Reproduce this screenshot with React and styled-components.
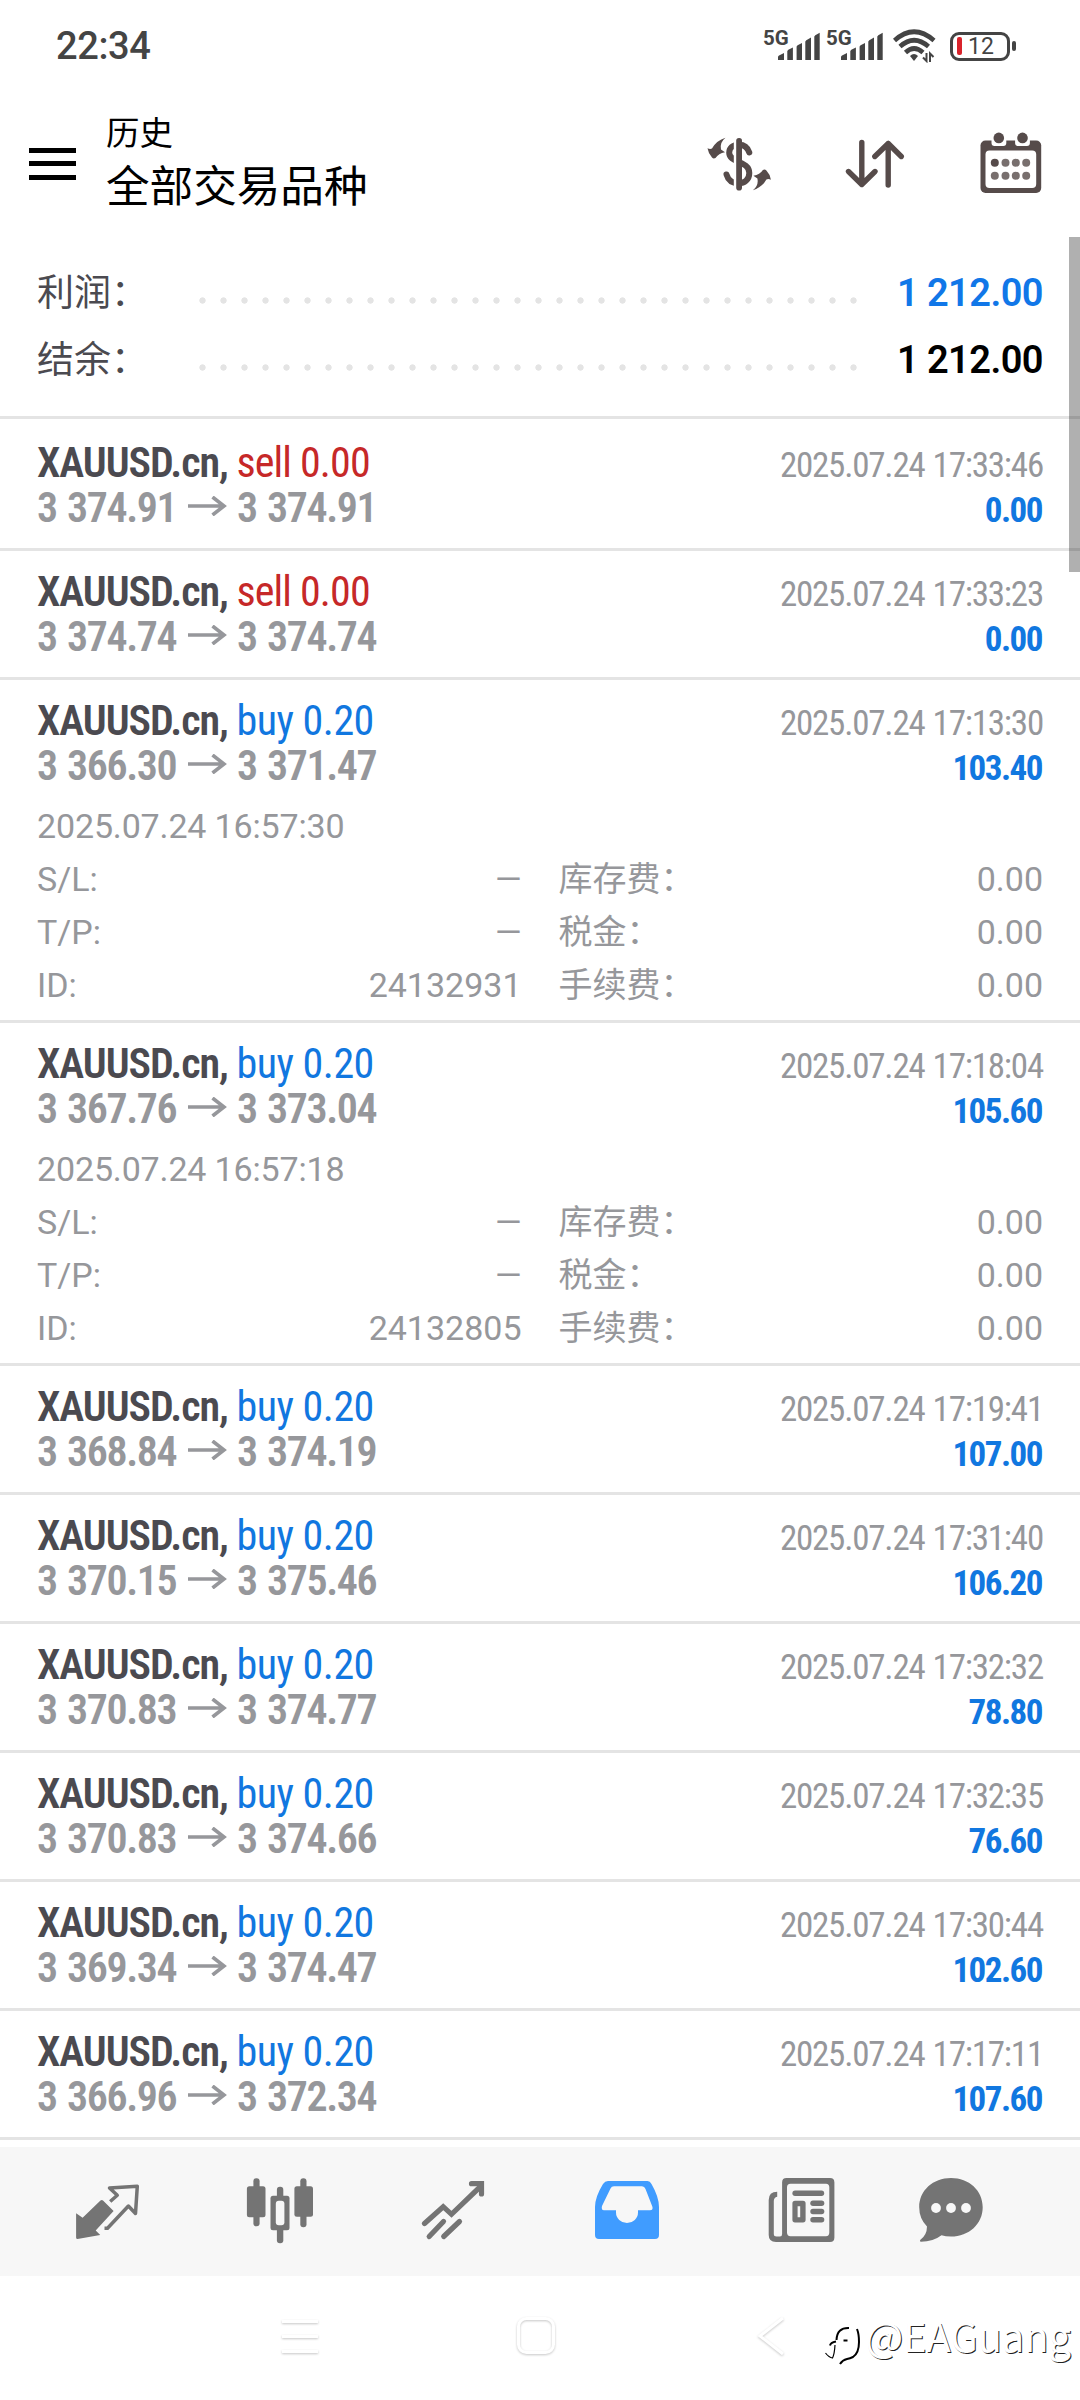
import React from 'react';
import styled, { createGlobalStyle } from 'styled-components';

const GlobalStyle = createGlobalStyle`
  * {
    box-sizing: border-box;
  }

  body {
    margin: 0;
    background: #fff;
    font-family: Roboto, 'Noto Sans CJK SC', sans-serif;
  }

  svg {
    display: block;
    flex-shrink: 0;
  }
`;

const Screen = styled.div`
  position: relative;
  display: flex;
  flex-direction: column;
  width: 1080px;
  height: 2400px;
  overflow: hidden;
  background: #fff;
`;

const StatusBar = styled.div`
  display: flex;
  justify-content: space-between;
  height: 90px;
  padding: 16px 64px 0 56px;
  color: #444;
`;

const Clock = styled.div`
  font-size: 38px;
  font-weight: 500;
  letter-spacing: -0.4px;
  line-height: 60px;
`;

const StatusIcons = styled.div`
  display: flex;
  align-items: center;
  height: 60px;
`;

const Signals = styled.div`
  display: flex;
  margin-right: 4px;
`;

const Signal = styled.div`
  display: flex;
  width: 63px;
  height: 32px;
`;

const Network = styled.span`
  width: 15px;
  font-size: 20.5px;
  font-weight: 700;
  line-height: 16px;
  white-space: nowrap;
`;

const Battery = styled.div`
  display: flex;
  align-items: center;
  width: 60px;
  height: 29px;
  margin-left: 14px;
  padding-left: 4px;
  border: 3px solid #444;
  border-radius: 9px;
  font-size: 23px;
  line-height: 23px;

  &::before {
    content: '';
    width: 5px;
    height: 18px;
    margin-right: 6px;
    border-radius: 2px;
    background: #d9232b;
  }
`;

const BatteryTip = styled.div`
  width: 4px;
  height: 10px;
  margin-left: 2px;
  border-radius: 2px;
  background: #444;
`;

const Header = styled.header`
  display: flex;
  align-items: center;
  height: 147px;
  padding: 0 37px 0 29px;
  color: #000;
`;

const MenuButton = styled.div`
  display: flex;
  flex-direction: column;
  justify-content: space-between;
  width: 47px;
  height: 32px;

  span {
    height: 5px;
    background: #000;
  }
`;

const Titles = styled.div`
  flex: 1;
  margin-left: 30px;
`;

const Title = styled.div`
  font-size: 33.5px;
  line-height: 48px;
`;

const Subtitle = styled.div`
  font-size: 43.6px;
  line-height: 60px;
`;

const Actions = styled.div`
  display: flex;
  gap: 72px;
  color: #564b4a;
`;

const History = styled.main`
  position: relative;
  height: 1910px;
`;

const ScrollThumb = styled.div`
  position: absolute;
  top: 0;
  right: 0;
  width: 11px;
  height: 335px;
  background: rgba(0, 0, 0, 0.31);
`;

const Summary = styled.section`
  height: 182px;
  padding: 23px 37px 0;
  border-bottom: 3px solid #e4e4e4;
`;

const SummaryRow = styled.div`
  display: flex;
  height: 67px;
  line-height: 67px;
`;

const SummaryLabel = styled.div`
  width: 155px;
  color: #4b4a50;
  font-size: 37px;
`;

const Dots = styled.div`
  width: 672px;
  height: 7px;
  margin-top: 37px;
  background: radial-gradient(circle, #e4e4e4 2.8px, transparent 3.5px) 0 0 / 21px 7px repeat-x;
`;

const SummaryValue = styled.div`
  flex: 1;
  color: ${(props) => props.$color};
  font-size: 38px;
  font-weight: 600;
  letter-spacing: -0.55px;
  text-align: right;
`;

const Deal = styled.article`
  padding: 18px 37px ${(props) => (props.$open ? 8 : 18)}px;
  border-top: 3px solid ${(props) => (props.$first ? 'transparent' : '#e4e4e4')};
  font-stretch: 75%;
`;

const DealLine = styled.div`
  display: flex;
  align-items: baseline;
  height: 45px;
  line-height: 45px;
  white-space: pre;
`;

const Symbol = styled.span`
  color: #4b4a50;
  font-size: 42px;
  font-weight: 600;
  letter-spacing: -1.05px;
`;

const Side = styled.span`
  color: ${(props) => (props.$side === 'sell' ? '#c62828' : '#1177e0')};
  font-size: 42px;
  letter-spacing: ${(props) => (props.$side === 'sell' ? -0.85 : -0.5)}px;
`;

const Prices = styled.span`
  display: flex;
  align-items: baseline;
  color: #96979b;
  font-size: 42px;
  font-weight: 600;
  letter-spacing: -1.35px;
  word-spacing: 1.8px;

  svg {
    align-self: center;
    margin-bottom: 3px;
  }
`;

const Price = styled.span`
  width: ${(props) => (props.$open ? '151px' : 'auto')};
`;

const CloseTime = styled.span`
  margin-left: auto;
  color: #96979b;
  font-size: 35px;
  letter-spacing: -1.2px;
  word-spacing: 1.2px;
`;

const Profit = styled.span`
  margin-left: auto;
  padding-right: 1px;
  color: #1177e0;
  font-size: 35px;
  font-weight: 700;
  letter-spacing: -1.5px;
`;

const Details = styled.div`
  display: grid;
  grid-template-columns: 1fr 1fr;
  column-gap: 37px;
  margin-top: 12px;
  color: #96979b;
  font-size: 34px;
  font-stretch: 100%;
  line-height: 53px;
`;

const OpenTime = styled.div`
  grid-column: 1 / -1;
  height: 53px;
  letter-spacing: -0.15px;
`;

const Detail = styled.div`
  display: flex;
  justify-content: space-between;
  height: 53px;
`;

const EndLine = styled.div`
  height: 3px;
  background: #e4e4e4;
`;

const TabBar = styled.nav`
  display: grid;
  grid-template-columns: repeat(4, 174px) 151px 72px;
  height: 129px;
  padding: 28px 0 0 72px;
  background: #f7f7f7;
`;

const Tab = styled.div`
  color: ${(props) => (props.$active ? '#409cff' : '#747474')};
`;

const SystemNav = styled.div`
  display: flex;
  align-items: center;
  height: 124px;
  padding: 0 0 2px 278px;

  svg {
    filter: drop-shadow(0 1px 1px rgba(0, 0, 0, 0.22));
  }
`;

const NavIcon = styled.svg`
  margin-right: ${(props) => props.$gap || 0}px;
`;

const Watermark = styled.div`
  position: absolute;
  right: 9px;
  bottom: 35px;
  display: flex;
  align-items: center;
  height: 60px;
  color: #fff;
  font-family: 'Noto Sans CJK SC', sans-serif;
  font-size: 39.8px;
  line-height: 60px;
  text-shadow: 1px 1px 0 #222;

  svg {
    margin: 20px -2px 0 2px;
  }
`;

const deals = [
  { side: 'sell', volume: '0.00', open: '3 374.91', close: '3 374.91', time: '2025.07.24 17:33:46', profit: '0.00' },
  { side: 'sell', volume: '0.00', open: '3 374.74', close: '3 374.74', time: '2025.07.24 17:33:23', profit: '0.00' },
  { side: 'buy', volume: '0.20', open: '3 366.30', close: '3 371.47', time: '2025.07.24 17:13:30', profit: '103.40', openTime: '2025.07.24 16:57:30', id: '24132931' },
  { side: 'buy', volume: '0.20', open: '3 367.76', close: '3 373.04', time: '2025.07.24 17:18:04', profit: '105.60', openTime: '2025.07.24 16:57:18', id: '24132805' },
  { side: 'buy', volume: '0.20', open: '3 368.84', close: '3 374.19', time: '2025.07.24 17:19:41', profit: '107.00' },
  { side: 'buy', volume: '0.20', open: '3 370.15', close: '3 375.46', time: '2025.07.24 17:31:40', profit: '106.20' },
  { side: 'buy', volume: '0.20', open: '3 370.83', close: '3 374.77', time: '2025.07.24 17:32:32', profit: '78.80' },
  { side: 'buy', volume: '0.20', open: '3 370.83', close: '3 374.66', time: '2025.07.24 17:32:35', profit: '76.60' },
  { side: 'buy', volume: '0.20', open: '3 369.34', close: '3 374.47', time: '2025.07.24 17:30:44', profit: '102.60' },
  { side: 'buy', volume: '0.20', open: '3 366.96', close: '3 372.34', time: '2025.07.24 17:17:11', profit: '107.60' },
];

const SignalBars = () => (
  <svg width="42" height="31" viewBox="0 0 42 31" fill="currentColor">
    <path d="M0 30v-3q0-1 1-1.600l5-2.400v7zM9.300 30v-9l1-1.300 4.600-2.200V30zM18.600 30V16.500l1-1.300 4.400-2.200V30zM27.300 30V11.500l1-1.300 4.700-2.700V30zM36.300 30V6.500l1-1.300 4.400-2.400V30z" />
  </svg>
);

const WifiIcon = () => (
  <svg width="43" height="34" viewBox="0 0 43 34" fill="none" stroke="currentColor">
    <path d="M1.500 11.500Q21 -6 41 11.500" strokeWidth="4.600" />
    <path d="M7 17.500Q21 5 35.500 17.500" strokeWidth="4.600" />
    <path d="M12.500 23.500Q21 15.500 30 23.500" strokeWidth="4.600" />
    <path d="M17 27q4-4 8 0l-4 5z" fill="currentColor" stroke="none" />
    <path d="M30 28.500l3.500 3.500v-8M40.500 28L37 24.500V33" strokeWidth="2" />
  </svg>
);

const CurrencyIcon = () => {
  const arrow = 'M18.500 5.800Q12.500 10.500 14 17.500L18 20.200Q11.500 21.500 8.500 26Q6.500 27 5 25.500Q1.500 22 0.500 16.200Q3 17.500 5 16.500Q9.500 8.500 18.500 5.800Z';
  return (
    <svg width="64" height="64" viewBox="0 0 64 64">
      <path
        d="M42.300 20.500C40.500 15 37 12.800 32 12.800C25.500 12.800 22.200 16.300 22.200 20.800C22.200 31 42.300 28.500 42.300 41C42.300 48 37 51.300 32 51.300C25.500 51.300 21 48 19.500 42.500"
        fill="none"
        stroke="currentColor"
        strokeWidth="6"
        strokeLinecap="round"
      />
      <path d="M26.800 6h4v53h-4z" fill="#fff" />
      <rect x="29.200" y="6" width="5.800" height="52.500" rx="2.800" fill="currentColor" />
      <path d={arrow} fill="currentColor" />
      <path d={arrow} fill="currentColor" transform="rotate(180 32.200 32)" />
    </svg>
  );
};

const SortIcon = () => (
  <svg width="64" height="64" viewBox="0 0 64 64" fill="none" stroke="currentColor" strokeWidth="5.400" strokeLinecap="round" strokeLinejoin="round">
    <path d="M18.800 10.500V52.500M5.500 39.500L18.800 52.500L32 39.500" />
    <path d="M45.200 53V11.500M31.800 24.500L45.200 11.500L58.300 24.500" />
  </svg>
);

const CalendarIcon = () => (
  <svg width="64" height="64" viewBox="0 0 64 64" fill="currentColor">
    <rect x="1.500" y="8.500" width="60.700" height="52.500" rx="5" />
    <rect x="6.500" y="18.500" width="50.700" height="37.500" rx="4" fill="#fff" />
    <path d="M12.500 8h14.800v3q0 3-3 3h-8.800q-3 0-3-3zM36.100 8h14.800v3q0 3-3 3h-8.800q-3 0-3-3z" fill="#fff" />
    <circle cx="19.800" cy="5.900" r="5.300" />
    <circle cx="43.500" cy="5.900" r="5.300" />
    {[30.8, 43.8].map((y) =>
      [15.8, 26.5, 36.8, 47.2].map((x) => (
        <circle key={`${x}-${y}`} cx={x} cy={y} r="4" opacity={x < 20 && y < 40 ? 1 : 0.8} />
      ))
    )}
  </svg>
);

const PriceArrow = () => (
  <svg width="49" height="20" viewBox="0 0 49 20" fill="none" stroke="#96979b" strokeWidth="3.600">
    <path d="M0 10H36M24.500 1L36 10L24.500 19" />
  </svg>
);

const TradeIcon = () => (
  <svg width="72" height="72" viewBox="0 0 72 72">
    <path d="M4.100 38.300L10.600 42.700L28.500 25.500Q29.900 24.500 31 25.500L41.600 36L23.700 55.500L28.200 60L5.500 64Q4.100 64 4.100 62.500Z" fill="currentColor" />
    <path d="M38.200 26.500L45.300 20.300L37.500 13L65.300 11.200L63.500 38.500L56.400 31L35.500 53.200H32.500" fill="none" stroke="currentColor" strokeWidth="3.500" strokeLinejoin="round" />
  </svg>
);

const ChartIcon = () => (
  <svg width="72" height="72" viewBox="0 0 72 72" fill="currentColor">
    <rect x="7.400" y="3.300" width="6.200" height="48" rx="3" />
    <rect x="0.900" y="11.300" width="18.600" height="31" rx="2.500" />
    <rect x="30.900" y="11.700" width="6.400" height="56.600" rx="3" />
    <rect x="24.500" y="20.700" width="19" height="34.500" rx="2.500" />
    <rect x="29.800" y="25.700" width="8.600" height="24.500" rx="3" fill="#f7f7f7" />
    <rect x="54.300" y="3.300" width="6.200" height="49" rx="3" />
    <rect x="48.400" y="11.300" width="18.600" height="30.500" rx="2.500" />
  </svg>
);

const SignalsIcon = () => (
  <svg width="72" height="72" viewBox="0 0 72 72" fill="none" stroke="currentColor" strokeWidth="5.200" strokeLinecap="round">
    <path d="M4.500 48.500L23.200 31.700L31.500 39.300L61 11" />
    <path d="M51.500 8.700H61.500V19" />
    <path d="M9.200 61.500L23.500 46.500M23.700 61.500L39.500 46.500" />
  </svg>
);

const InboxIcon = () => (
  <svg width="72" height="72" viewBox="0 0 72 72" fill="currentColor" fillRule="evenodd">
    <path d="M14 6H53.500Q56 6 57.500 9Q65 22 65 32V60Q65 64 61 64H5Q1 64 1 60V32Q1 22 9 9Q11 6 14 6ZM20 11.300Q17.500 11.300 16.500 13.500L8 31Q7 35.200 10 35.200H22V37.500A11 10.500 0 0 0 44 37.500V35.200H56Q59.500 35.200 58.300 31.500L51.500 14Q50.500 11.300 48 11.300Z" />
  </svg>
);

const NewsIcon = () => (
  <svg width="72" height="72" viewBox="0 0 72 72" fill="currentColor" fillRule="evenodd">
    <path d="M18.500 3H62Q66.400 3 66.400 7.400V62.500Q66.400 67 62 67H8Q0.700 67 0.700 60V25Q0.700 16.700 9.200 16.700V21.700Q5.800 22.500 5.800 26V59Q5.800 61.500 8.500 61.500H12Q14.100 61.500 14.100 59V7.400Q14.100 3 18.500 3ZM22.500 8.700Q19 8.700 19 12.200V57.500Q19 61.200 22.500 61.200H58Q61.300 61.200 61.300 57.500V12.200Q61.300 8.700 58 8.700Z" />
    <rect x="24.400" y="15.500" width="31.800" height="5.500" rx="2.700" />
    <path d="M27 25.700h8q2.600 0 2.600 2.600v16.500q0 2.600-2.600 2.600h-8q-2.600 0-2.600-2.600V28.300q0-2.600 2.600-2.600zM29.600 31.300v11h2.600v-11z" />
    <rect x="42.300" y="25.500" width="14" height="5.500" rx="2.700" />
    <rect x="42.300" y="33.700" width="14" height="5.500" rx="2.700" />
    <rect x="42.300" y="41.900" width="14" height="5.500" rx="2.700" />
  </svg>
);

const ChatIcon = () => (
  <svg width="72" height="72" viewBox="0 0 72 72" fill="currentColor">
    <path d="M32 3C50 3 63.700 15.500 63.700 32.200S50 61.500 32 61.500Q26.500 61.500 22.500 60.300Q14 66.800 2 66.800Q0.200 66.500 1.200 65Q8 60 8 51.500Q0.200 43.500 0.200 32.200C0.200 15.500 14 3 32 3Z" />
    <circle cx="17" cy="33" r="4.900" fill="#f7f7f7" />
    <circle cx="32" cy="33" r="4.900" fill="#f7f7f7" />
    <circle cx="47" cy="33" r="4.900" fill="#f7f7f7" />
  </svg>
);

const tabs = [TradeIcon, ChartIcon, SignalsIcon, InboxIcon, NewsIcon, ChatIcon];

const DealItem = ({ deal, first }) => (
  <Deal $first={first} $open={Boolean(deal.id)}>
    <DealLine>
      <Symbol>XAUUSD.cn, </Symbol>
      <Side $side={deal.side}>{deal.side} {deal.volume}</Side>
      <CloseTime>{deal.time}</CloseTime>
    </DealLine>
    <DealLine>
      <Prices>
        <Price $open>{deal.open}</Price>
        <PriceArrow />
        <Price>{deal.close}</Price>
      </Prices>
      <Profit>{deal.profit}</Profit>
    </DealLine>
    {deal.id && (
      <Details>
        <OpenTime>{deal.openTime}</OpenTime>
        <Detail><span>S/L:</span><span>—</span></Detail>
        <Detail><span>库存费：</span><span>0.00</span></Detail>
        <Detail><span>T/P:</span><span>—</span></Detail>
        <Detail><span>税金：</span><span>0.00</span></Detail>
        <Detail><span>ID:</span><span>{deal.id}</span></Detail>
        <Detail><span>手续费：</span><span>0.00</span></Detail>
      </Details>
    )}
  </Deal>
);

const App = () => (
  <Screen lang="zh-CN">
    <GlobalStyle />
    <StatusBar>
      <Clock>22:34</Clock>
      <StatusIcons>
        <Signals>
          <Signal><Network>5G</Network><SignalBars /></Signal>
          <Signal><Network>5G</Network><SignalBars /></Signal>
        </Signals>
        <WifiIcon />
        <Battery>12</Battery>
        <BatteryTip />
      </StatusIcons>
    </StatusBar>

    <Header>
      <MenuButton>
        <span />
        <span />
        <span />
      </MenuButton>
      <Titles>
        <Title>历史</Title>
        <Subtitle>全部交易品种</Subtitle>
      </Titles>
      <Actions>
        <CurrencyIcon />
        <SortIcon />
        <CalendarIcon />
      </Actions>
    </Header>

    <History>
      <Summary>
        <SummaryRow>
          <SummaryLabel>利润：</SummaryLabel>
          <Dots />
          <SummaryValue $color="#1177e8">1 212.00</SummaryValue>
        </SummaryRow>
        <SummaryRow>
          <SummaryLabel>结余：</SummaryLabel>
          <Dots />
          <SummaryValue $color="#000">1 212.00</SummaryValue>
        </SummaryRow>
      </Summary>
      {deals.map((deal, index) => (
        <DealItem key={deal.time} deal={deal} first={index === 0} />
      ))}
      <EndLine />
      <ScrollThumb />
    </History>

    <TabBar>
      {tabs.map((Icon, index) => (
        <Tab key={index} $active={index === 3}>
          <Icon />
        </Tab>
      ))}
    </TabBar>

    <SystemNav>
      <NavIcon $gap={190} width="46" height="46" viewBox="0 0 46 46" fill="none" stroke="#fff" strokeWidth="3">
        <path d="M4 7.500H40M4 22.500H40M4 37.500H40" />
      </NavIcon>
      <NavIcon $gap={194} width="46" height="46" viewBox="0 0 46 46" fill="none" stroke="#fff" strokeWidth="3">
        <rect x="4.500" y="4.500" width="35" height="34" rx="8" />
      </NavIcon>
      <NavIcon width="46" height="46" viewBox="0 0 46 46" fill="none" stroke="#fff" strokeWidth="3">
        <path d="M29 4L6 22L29 40" />
      </NavIcon>
    </SystemNav>

    <Watermark>
      <svg width="43" height="46" viewBox="0 0 43 46" fill="none" stroke="#000" strokeWidth="2">
        <path d="M25 6Q13 5.500 12.500 18M6 23.500Q6.500 20.500 12 19.500" />
        <path d="M19.500 18.500H23.500" />
        <path d="M33 7Q35 12 35 20Q35 31 29 35Q26 36.500 23 37Q18.500 38 16 42" />
        <path d="M11 23Q10.500 32 8.500 36Q5 35.500 1.500 31" strokeWidth="1.200" />
      </svg>
      @EAGuang
    </Watermark>
  </Screen>
);

export default App;
